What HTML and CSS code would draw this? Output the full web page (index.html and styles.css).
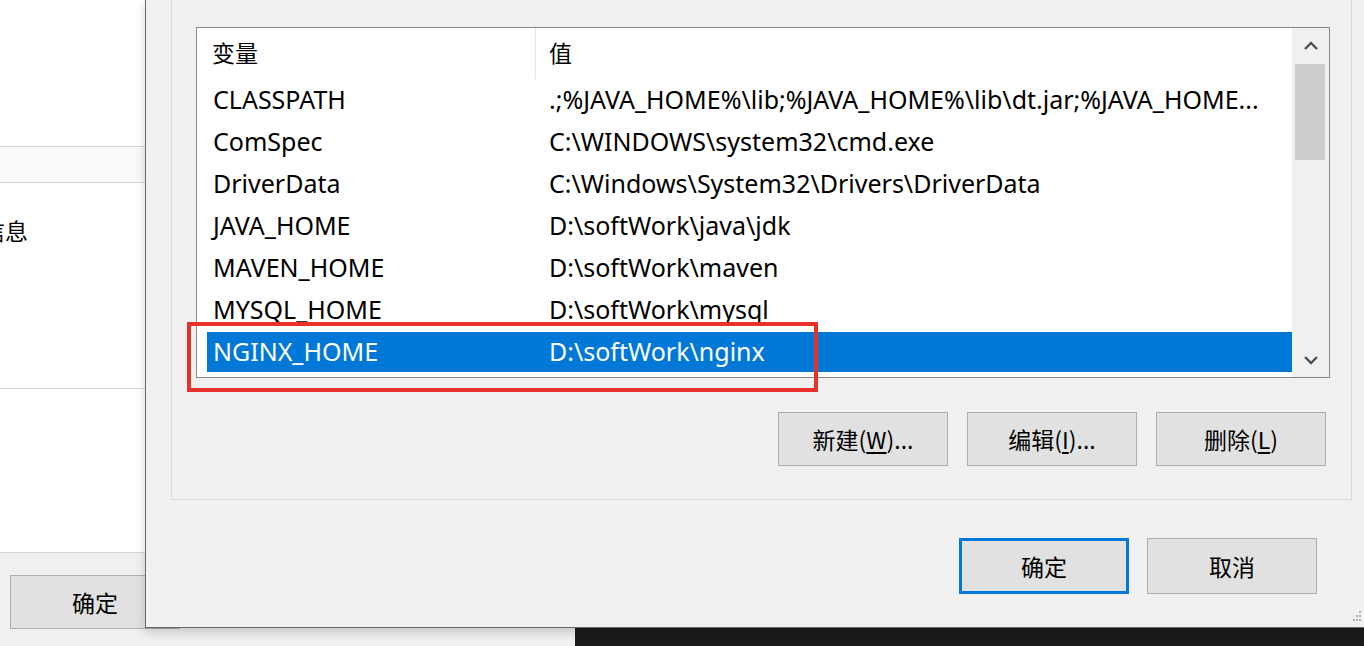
FILE: index.html
```html
<!DOCTYPE html>
<html lang="zh-CN">
<head>
  <meta charset="UTF-8">
  <title>环境变量</title>
  <link rel="stylesheet" href="styles.css">
</head>
<body>
  <div class="back-window">
    <div class="bw-section bw-top"></div>
    <div class="bw-section bw-strip"></div>
    <div class="bw-section bw-info"><span class="bw-label">信息</span></div>
    <div class="bw-section bw-blank"></div>
    <div class="bw-footer">
      <button class="win-btn bw-ok">确定</button>
    </div>
  </div>

  <div class="dialog">
    <div class="group">
      <div class="listview">
        <div class="list-body">
          <div class="list-header">
            <div class="hcell">变量</div>
            <div class="hcell hcell-value">值</div>
          </div>
          <div class="row"><span class="cell">CLASSPATH</span><span class="cell">.;%JAVA_HOME%\lib;%JAVA_HOME%\lib\dt.jar;%JAVA_HOME...</span></div>
          <div class="row"><span class="cell">ComSpec</span><span class="cell">C:\WINDOWS\system32\cmd.exe</span></div>
          <div class="row"><span class="cell">DriverData</span><span class="cell">C:\Windows\System32\Drivers\DriverData</span></div>
          <div class="row"><span class="cell">JAVA_HOME</span><span class="cell">D:\softWork\java\jdk</span></div>
          <div class="row"><span class="cell">MAVEN_HOME</span><span class="cell">D:\softWork\maven</span></div>
          <div class="row"><span class="cell">MYSQL_HOME</span><span class="cell">D:\softWork\mysql</span></div>
          <div class="row selected"><span class="cell">NGINX_HOME</span><span class="cell">D:\softWork\nginx</span></div>
        </div>
        <div class="scrollbar">
          <div class="arrow">
            <svg width="16" height="10" viewBox="0 0 16 10"><polyline points="2,8 8,2 14,8" fill="none" stroke="#505050" stroke-width="2.4"/></svg>
          </div>
          <div class="thumb"></div>
          <div class="track"></div>
          <div class="arrow">
            <svg width="16" height="10" viewBox="0 0 16 10"><polyline points="2,2 8,8 14,2" fill="none" stroke="#505050" stroke-width="2.4"/></svg>
          </div>
        </div>
      </div>
      <div class="group-buttons">
        <button class="win-btn">新建(<u>W</u>)...</button>
        <button class="win-btn">编辑(<u>I</u>)...</button>
        <button class="win-btn">删除(<u>L</u>)</button>
      </div>
    </div>
    <div class="dialog-buttons">
      <button class="win-btn default">确定</button>
      <button class="win-btn">取消</button>
    </div>
    <svg class="grip" width="10" height="12" viewBox="0 0 10 12">
      <rect x="7" y="0" width="2" height="2" fill="#b0b0b0"/>
      <rect x="4" y="4" width="2" height="2" fill="#b0b0b0"/>
      <rect x="7" y="4" width="2" height="2" fill="#b0b0b0"/>
      <rect x="1" y="8" width="2" height="2" fill="#b0b0b0"/>
      <rect x="4" y="8" width="2" height="2" fill="#b0b0b0"/>
      <rect x="7" y="8" width="2" height="2" fill="#b0b0b0"/>
    </svg>
  </div>

  <div class="highlight"></div>
</body>
</html>
```

FILE: styles.css
```css
* {
  box-sizing: border-box;
}

body {
  margin: 0;
  width: 1364px;
  height: 646px;
  overflow: hidden;
  position: relative;
  background: #1b1b1b;
  font-family: "Noto Sans", "Noto Sans CJK SC", sans-serif;
  color: #000;
}

/* window behind the dialog */
.back-window {
  position: absolute;
  left: 0;
  top: 0;
  width: 575px;
  height: 646px;
  background: #fff;
  display: flex;
  flex-direction: column;
}

.bw-section {
  border-bottom: 1px solid #d6d6d6;
}

.bw-top {
  height: 147px;
}

.bw-strip {
  height: 36px;
  background: #f9f9f9;
}

.bw-info {
  height: 206px;
  padding-top: 33px;
}

.bw-label {
  display: block;
  margin-left: -18px;
  font-family: "Noto Sans CJK SC", sans-serif;
  font-size: 23px;
  line-height: 28px;
}

.bw-blank {
  height: 164px;
}

.bw-footer {
  flex: 1;
  background: #f0f0f0;
  padding: 22px 0 0 10px;
}

.bw-ok {
  width: 172px;
  height: 52px;
}

/* dialog */
.dialog {
  position: absolute;
  left: 145px;
  top: 0;
  width: 1219px;
  height: 628px;
  background: #f0f0f0;
  border-left: 1px solid #6a6a6a;
  border-bottom: 1px solid #6a6a6a;
  box-shadow: 0 4px 10px rgba(0, 0, 0, 0.18);
  padding-left: 25px;
}

.group {
  width: 1181px;
  margin-top: -10px;
  border: 1px solid #d8d8d8;
  padding: 36px 25px 33px 24px;
}

.listview {
  width: 1134px;
  height: 351px;
  border: 1px solid #828790;
  background: #fff;
  display: flex;
}

.list-body {
  flex: 1;
  padding-left: 10px;
  font-size: 25px;
}

.list-header {
  display: grid;
  grid-template-columns: 329px 1fr;
  height: 51px;
  margin-bottom: 1px;
}

.hcell {
  font-family: "Noto Sans CJK SC", sans-serif;
  font-size: 23px;
  line-height: 28px;
  padding: 10px 0 0 5px;
  border-right: 1px solid #e5e5e5;
}

.hcell-value {
  border-right: none;
  padding-left: 13px;
}

.row {
  display: grid;
  grid-template-columns: 336px 1fr;
  height: 40px;
  line-height: 38px;
  margin-bottom: 2px;
  white-space: nowrap;
}

.cell {
  padding-left: 6px;
  overflow: hidden;
}

.row.selected {
  background: #0078d7;
  color: #fff;
}

.scrollbar {
  width: 37px;
  background: #f0f0f0;
  display: flex;
  flex-direction: column;
}

.arrow {
  height: 35px;
  display: flex;
  align-items: center;
  justify-content: center;
}

.thumb {
  height: 96px;
  margin: 1px 4px 0 3px;
  background: #cdcdcd;
}

.track {
  flex: 1;
}

.group-buttons {
  display: flex;
  justify-content: flex-end;
  gap: 19px;
  margin-top: 34px;
}

.win-btn {
  width: 170px;
  height: 54px;
  background: #e1e1e1;
  border: 1px solid #adadad;
  font-family: "Noto Sans CJK SC", sans-serif;
  font-size: 23px;
  color: #000;
  padding: 0;
}

.win-btn u {
  text-underline-offset: 3px;
}

.dialog-buttons {
  display: flex;
  justify-content: flex-end;
  gap: 18px;
  margin-top: 38px;
  padding-right: 47px;
}

.dialog-buttons .win-btn {
  height: 56px;
}

.win-btn.default {
  border: 3px solid #0078d7;
}

.grip {
  position: absolute;
  right: 2px;
  bottom: 4px;
}

/* red annotation box */
.highlight {
  position: absolute;
  left: 187px;
  top: 322px;
  width: 631px;
  height: 70px;
  border: 4px solid #e8312b;
}
```
